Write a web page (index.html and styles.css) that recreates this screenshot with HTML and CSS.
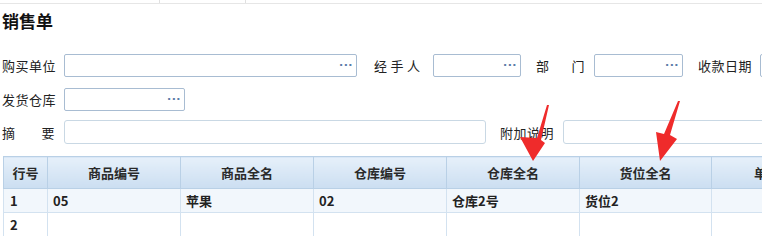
FILE: index.html
```html
<!DOCTYPE html>
<html lang="zh-CN">
<head>
  <meta charset="UTF-8">
  <title>销售单</title>
  <link rel="stylesheet" href="styles.css">
</head>
<body>

<div class="page">
  <div class="tabs">
    <div class="tab tab-first"></div>
    <div class="tab tab-second"></div>
  </div>

  <h1 class="title">销售单</h1>

  <div class="form-row row-one">
    <span class="label">购买单位</span>
    <div class="field w-buyer"><span class="dots">···</span></div>
    <span class="label label-wide spaced">经手人</span>
    <div class="field w-handler"><span class="dots">···</span></div>
    <span class="label label-split split-dept"><b>部</b><b>门</b></span>
    <div class="field w-dept"><span class="dots">···</span></div>
    <span class="label label-date">收款日期</span>
    <div class="field w-date"></div>
  </div>

  <div class="form-row row-two">
    <span class="label">发货仓库</span>
    <div class="field w-store"><span class="dots">···</span></div>
  </div>

  <div class="form-row row-three">
    <span class="label label-split split-memo"><b>摘</b><b>要</b></span>
    <div class="field soft w-memo"></div>
    <span class="label label-extra">附加说明</span>
    <div class="field soft w-extra"></div>
  </div>

  <table class="grid">
    <colgroup>
      <col class="c-no">
      <col class="c-col"><col class="c-col"><col class="c-col"><col class="c-col">
      <col class="c-col2">
      <col class="c-last">
    </colgroup>
    <thead>
      <tr>
        <th>行号</th>
        <th>商品编号</th>
        <th>商品全名</th>
        <th>仓库编号</th>
        <th>仓库全名</th>
        <th>货位全名</th>
        <th>单价</th>
      </tr>
    </thead>
    <tbody>
      <tr class="active">
        <td>1</td>
        <td>05</td>
        <td>苹果</td>
        <td>02</td>
        <td>仓库2号</td>
        <td>货位2</td>
        <td></td>
      </tr>
      <tr>
        <td>2</td>
        <td></td><td></td><td></td><td></td><td></td><td></td>
      </tr>
    </tbody>
  </table>

  <!-- annotation arrows drawn over the form -->
  <svg class="marks" width="762" height="236" viewBox="0 0 762 236">
    <polygon points="549,105 541,140 545,143 533,161 520,137 537,138 547,105" />
    <polygon points="680,101 670,135 677,139 660,161 656,132 664,134 678,101" />
  </svg>
</div>

</body>
</html>
```

FILE: styles.css
```css
body {
  margin: 0;
  padding: 0;
  background-color: #fff;
  font-family: "Noto Sans CJK SC", "Liberation Sans", sans-serif;
  font-size: 13px;
  color: #1e1e1e;
  overflow: hidden;
}

.page {
  position: relative;
  width: 762px;
  height: 236px;
  overflow: hidden;
}

.tabs {
  display: flex;
  height: 3px;
  border-bottom: 1px solid #e6e6e6;
}

.tab {
  height: 3px;
  border-right: 1px solid #e0e0e0;
}

.tab-first {
  width: 159px;
}

.tab-second {
  width: 85px;
}

.title {
  margin: 5px 0 0 2px;
  font-size: 17px;
  line-height: 24px;
  font-weight: bold;
  color: #111;
}

.form-row {
  display: flex;
  align-items: center;
  padding-left: 2px;
  white-space: nowrap;
}

.row-one {
  margin-top: 21px;
  height: 23px;
}

.row-two {
  margin-top: 11px;
  height: 23px;
}

.row-three {
  margin-top: 9px;
  height: 24px;
}

.label {
  flex-shrink: 0;
  width: 62px;
  letter-spacing: 0.5px;
  color: #222;
}

.label-wide {
  width: 59px;
  margin-left: 17px;
}

.spaced {
  letter-spacing: 3.5px;
}

.label-split {
  display: flex;
  justify-content: space-between;
  box-sizing: border-box;
}

.label-split b {
  font-weight: normal;
}

.split-dept {
  width: 58px;
  margin-left: 15px;
  padding-right: 9px;
}

.split-memo {
  width: 62px;
  padding-right: 9px;
}

.label-date {
  margin-left: 15px;
}

.label-extra {
  margin-left: 14px;
  width: 63px;
}

.field {
  flex-shrink: 0;
  box-sizing: border-box;
  height: 23px;
  border: 1px solid #a8bcd2;
  border-radius: 2px;
  background-color: #fff;
  display: flex;
  align-items: center;
  justify-content: flex-end;
  padding-right: 3px;
}

.field.soft {
  height: 24px;
  border-color: #c9d8e4;
  border-radius: 3px;
}

.dots {
  font-family: "DejaVu Sans", sans-serif;
  font-size: 11px;
  font-weight: bold;
  letter-spacing: 0.5px;
  color: #5b7ca8;
}

.w-buyer { width: 293px; }
.w-handler { width: 88px; }
.w-dept { width: 89px; }
.w-date { width: 60px; }
.w-store { width: 121px; }
.w-memo { width: 422px; }
.w-extra { width: 260px; }

.grid {
  margin: 12px 0 0 3px;
  border-collapse: collapse;
  table-layout: fixed;
  width: 820px;
}

.c-no { width: 44px; }
.c-col { width: 133px; }
.c-col2 { width: 132px; }
.c-last { width: 111px; }

.grid th {
  height: 31px;
  padding: 0;
  font-size: 13px;
  font-weight: bold;
  color: #2a2a2a;
  text-align: center;
  background: linear-gradient(#e6f0fa, #cbdef1);
  border: 1px solid #b9d0e6;
}

.grid td {
  height: 23px;
  padding: 0 5px;
  font-weight: bold;
  color: #222;
  border: 1px solid #d3e2f0;
  background-color: #fff;
  white-space: nowrap;
  overflow: hidden;
}

.grid td:first-child {
  padding-left: 6px;
}

.grid tr.active td {
  background-color: #f2f7fc;
}

.marks {
  position: absolute;
  left: 0;
  top: 0;
  pointer-events: none;
}

.marks polygon {
  fill: #ef2b2b;
}
```
